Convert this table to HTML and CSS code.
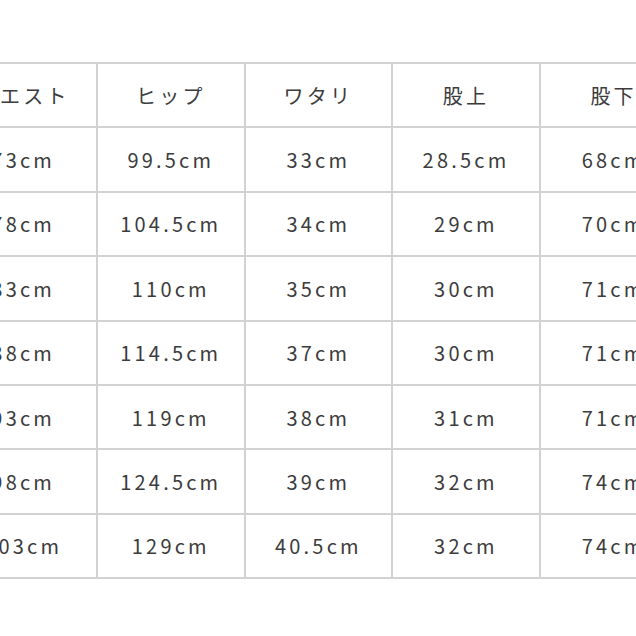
FILE: index.html
```html
<!DOCTYPE html>
<html lang="ja">
<head>
<meta charset="utf-8">
<title>サイズ表</title>
<link rel="stylesheet" href="styles.css">
</head>
<body>
<div class="viewport">
  <div class="size-table">
    <div class="cell">ウエスト</div><div class="cell">ヒップ</div><div class="cell">ワタリ</div><div class="cell">股上</div><div class="cell">股下</div>
    <div class="cell">73cm</div><div class="cell">99.5cm</div><div class="cell">33cm</div><div class="cell">28.5cm</div><div class="cell">68cm</div>
    <div class="cell">78cm</div><div class="cell">104.5cm</div><div class="cell">34cm</div><div class="cell">29cm</div><div class="cell">70cm</div>
    <div class="cell">83cm</div><div class="cell">110cm</div><div class="cell">35cm</div><div class="cell">30cm</div><div class="cell">71cm</div>
    <div class="cell">88cm</div><div class="cell">114.5cm</div><div class="cell">37cm</div><div class="cell">30cm</div><div class="cell">71cm</div>
    <div class="cell">93cm</div><div class="cell">119cm</div><div class="cell">38cm</div><div class="cell">31cm</div><div class="cell">71cm</div>
    <div class="cell">98cm</div><div class="cell">124.5cm</div><div class="cell">39cm</div><div class="cell">32cm</div><div class="cell">74cm</div>
    <div class="cell">103cm</div><div class="cell">129cm</div><div class="cell">40.5cm</div><div class="cell">32cm</div><div class="cell">74cm</div>
  </div>
</div>
</body>
</html>
```
FILE: styles.css
```css
html, body {
  margin: 0;
  padding: 0;
  background: #ffffff;
}
.viewport {
  width: 636px;
  height: 636px;
  overflow: hidden;
  padding-top: 62px;
  box-sizing: border-box;
}
.size-table {
  display: grid;
  grid-template-columns: repeat(5, 145.6px);
  grid-auto-rows: 62.4px;
  gap: 2px;
  padding: 2px;
  width: max-content;
  background: #d2d2d2;
  margin-left: -51.6px;
}
.cell {
  background: #ffffff;
  display: flex;
  align-items: center;
  justify-content: center;
  font-family: "Noto Sans CJK JP", "Noto Sans", sans-serif;
  font-size: 20px;
  font-weight: 400;
  letter-spacing: 3.2px;
  color: #3c3c3c;
}
```
